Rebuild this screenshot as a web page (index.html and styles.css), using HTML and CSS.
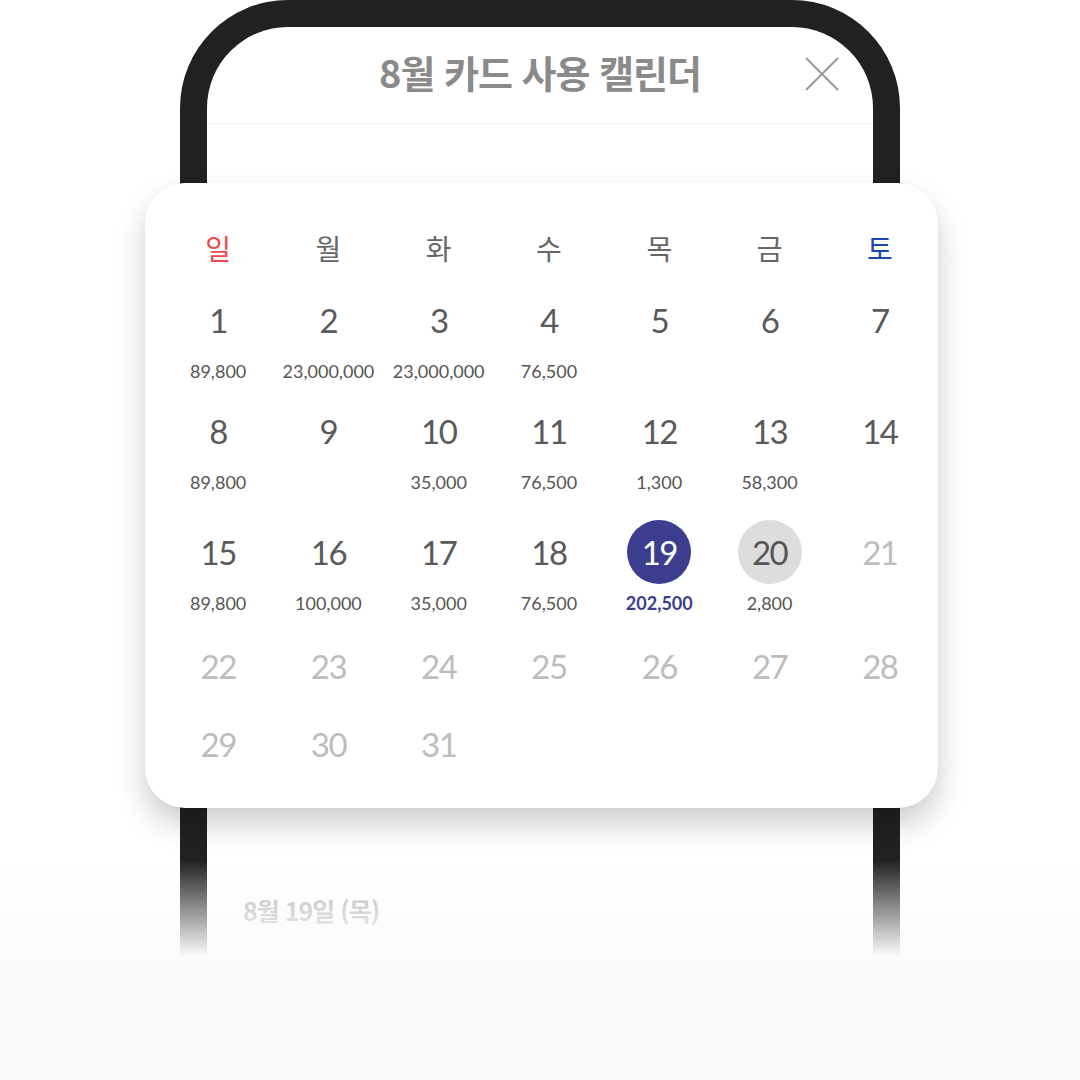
FILE: index.html
```html
<!DOCTYPE html>
<html lang="ko">
<head>
<meta charset="utf-8">
<link rel="stylesheet" href="styles.css">
</head>
<body>
<div class="stage">
  <div class="phone">
    <div class="screen-header">
      <h1 class="title">8월 카드 사용 캘린더</h1>
      <svg class="close" width="34" height="34" viewBox="0 0 34 34"><path d="M1 1L33 33M33 1L1 33" stroke="#9a9a9a" stroke-width="2" fill="none"/></svg>
    </div>
    <div class="screen-body">
      <div class="day-label">8월 19일 (목)</div>
    </div>
  </div>
  <div class="fade"></div>
  <div class="card">
    <div class="weekdays">
      <span class="sun">일</span><span>월</span><span>화</span><span>수</span><span>목</span><span>금</span><span class="sat">토</span>
    </div>
    <div class="week">
      <div class="cell"><span class="num">1</span><span class="amt">89,800</span></div>
      <div class="cell"><span class="num">2</span><span class="amt">23,000,000</span></div>
      <div class="cell"><span class="num">3</span><span class="amt">23,000,000</span></div>
      <div class="cell"><span class="num">4</span><span class="amt">76,500</span></div>
      <div class="cell"><span class="num">5</span><span class="amt"></span></div>
      <div class="cell"><span class="num">6</span><span class="amt"></span></div>
      <div class="cell"><span class="num">7</span><span class="amt"></span></div>
    </div>
    <div class="week">
      <div class="cell"><span class="num">8</span><span class="amt">89,800</span></div>
      <div class="cell"><span class="num">9</span><span class="amt"></span></div>
      <div class="cell"><span class="num">10</span><span class="amt">35,000</span></div>
      <div class="cell"><span class="num">11</span><span class="amt">76,500</span></div>
      <div class="cell"><span class="num">12</span><span class="amt">1,300</span></div>
      <div class="cell"><span class="num">13</span><span class="amt">58,300</span></div>
      <div class="cell"><span class="num">14</span><span class="amt"></span></div>
    </div>
    <div class="week w3">
      <div class="cell"><span class="num">15</span><span class="amt">89,800</span></div>
      <div class="cell"><span class="num">16</span><span class="amt">100,000</span></div>
      <div class="cell"><span class="num">17</span><span class="amt">35,000</span></div>
      <div class="cell"><span class="num">18</span><span class="amt">76,500</span></div>
      <div class="cell selected"><span class="num">19</span><span class="amt">202,500</span></div>
      <div class="cell today"><span class="num">20</span><span class="amt">2,800</span></div>
      <div class="cell future"><span class="num">21</span><span class="amt"></span></div>
    </div>
    <div class="week w4">
      <div class="cell future"><span class="num">22</span></div>
      <div class="cell future"><span class="num">23</span></div>
      <div class="cell future"><span class="num">24</span></div>
      <div class="cell future"><span class="num">25</span></div>
      <div class="cell future"><span class="num">26</span></div>
      <div class="cell future"><span class="num">27</span></div>
      <div class="cell future"><span class="num">28</span></div>
    </div>
    <div class="week w5">
      <div class="cell future"><span class="num">29</span></div>
      <div class="cell future"><span class="num">30</span></div>
      <div class="cell future"><span class="num">31</span></div>
      <div class="cell"></div>
      <div class="cell"></div>
      <div class="cell"></div>
      <div class="cell"></div>
    </div>
  </div>
</div>
</body>
</html>
```

FILE: styles.css
```css
* { box-sizing: border-box; }
html, body { margin: 0; padding: 0; background: #ffffff; }
body { font-family: Lato, "Noto Sans CJK KR", sans-serif; }

.stage {
  position: relative;
  width: 1080px;
  height: 1080px;
  overflow: hidden;
  background: #ffffff;
}

.phone {
  position: absolute;
  left: 180px;
  top: 0;
  width: 720px;
  height: 1140px;
  border: 27px solid #212121;
  border-bottom: none;
  border-radius: 108px 108px 0 0;
  background: #ffffff;
}

.screen-header {
  position: relative;
  height: 97px;
  border-bottom: 1px solid #f4f4f4;
  display: flex;
  align-items: center;
  justify-content: center;
}

.title {
  margin: 0 0 8px 0;
  font-family: "Noto Sans CJK KR", sans-serif;
  font-weight: 700;
  font-size: 38px;
  letter-spacing: -1px;
  color: #8a8a8a;
}

.close {
  position: absolute;
  right: 34px;
  top: 30px;
}

.screen-body {
  padding: 768px 0 0 36px;
}

.day-label {
  font-family: "Noto Sans CJK KR", sans-serif;
  font-weight: 700;
  font-size: 25px;
  letter-spacing: -1px;
  color: #b0b0b0;
}

.fade {
  position: absolute;
  left: 0;
  top: 860px;
  width: 1080px;
  height: 220px;
  background: linear-gradient(to bottom, rgba(250,250,250,0) 0px, rgba(250,250,250,1) 96px, #fafafa 220px);
}

.card {
  position: absolute;
  left: 145px;
  top: 183px;
  width: 793px;
  padding: 45px 3px 32px 18px;
  background: #ffffff;
  border-radius: 40px;
  box-shadow: 0 16px 30px rgba(0,0,0,0.2), 0 0 3px rgba(0,0,0,0.04);
}

.weekdays {
  display: grid;
  grid-template-columns: repeat(7, 1fr);
  height: 40px;
  line-height: 40px;
  text-align: center;
  font-family: "Noto Sans CJK KR", sans-serif;
  font-size: 28px;
  color: #666666;
  margin-bottom: 20px;
}
.weekdays .sun { color: #f2464f; }
.weekdays .sat { color: #1b45b5; }

.week {
  display: grid;
  grid-template-columns: repeat(7, 1fr);
  margin-top: 18px;
}
.weekdays + .week { margin-top: 0; }
.week.w3 { margin-top: 28px; }
.week.w4 { margin-top: 21px; }
.week.w5 { margin-top: 14px; }

.cell {
  display: flex;
  flex-direction: column;
  align-items: center;
}

.num {
  width: 64px;
  height: 64px;
  line-height: 64px;
  border-radius: 50%;
  text-align: center;
  font-size: 33px;
  letter-spacing: -1.5px;
  color: #5a5a5a;
}

.amt {
  margin-top: 9px;
  height: 20px;
  line-height: 20px;
  font-size: 18px;
  color: #555555;
  white-space: nowrap;
}

.future .num { color: #bdbdbd; }

.selected .num { background: #3b3d8e; color: #ffffff; }
.selected .amt { color: #3b3d8e; font-weight: 700; }

.today .num { background: #dddddd; color: #555555; }
```
